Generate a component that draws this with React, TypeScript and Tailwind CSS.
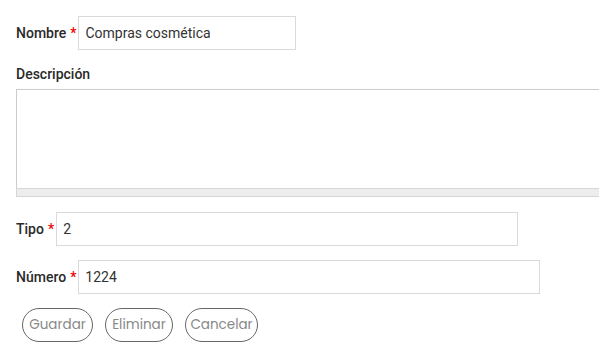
const roboto = { fontFamily: "Roboto, 'Liberation Sans', sans-serif" };

function Label({ text, required }: { text: string; required?: boolean }) {
  return (
    <span className="text-[14px] font-medium text-[#2a2a2a] whitespace-nowrap">
      {text}
      {required && <span className="text-[#e00] ml-1">*</span>}
    </span>
  );
}

function TextField({ value, width }: { value: string; width: string }) {
  return (
    <div className={`${width} h-[34px] border border-[#d9d9d9] flex items-center px-[6px] text-[14px] text-[#333]`}>
      {value}
    </div>
  );
}

function PillButton({ label, width }: { label: string; width: string }) {
  return (
    <button
      className={`${width} h-[34px] rounded-full border border-[#666] text-[#888] text-[13.5px] bg-white text-center`}
      style={{ fontFamily: "Poppins, 'Noto Sans', sans-serif" }}
    >
      {label}
    </button>
  );
}

export default function App() {
  return (
    <div className="w-[599px] h-[352px] overflow-hidden bg-white pl-[16px] pt-[16px]" style={roboto}>
      {/* Nombre */}
      <div className="flex items-center gap-[2px]">
        <Label text="Nombre" required />
        <TextField value="Compras cosmética" width="w-[218px]" />
      </div>

      {/* Descripción */}
      <div className="mt-[14px] h-[20px] flex items-center">
        <Label text="Descripción" />
      </div>
      <div className="mt-[5px] w-[640px]">
        <div className="h-[99px] border border-[#ccc] border-b-0 bg-white" />
        <div className="h-[9px] border border-[#d6d6d6] bg-[#ededed]" />
      </div>

      {/* Tipo */}
      <div className="mt-[15px] flex items-center gap-[2px]">
        <Label text="Tipo" required />
        <TextField value="2" width="w-[462px]" />
      </div>

      {/* Número */}
      <div className="mt-[14px] flex items-center gap-[2px]">
        <Label text="Número" required />
        <TextField value="1224" width="w-[462px]" />
      </div>

      {/* Acciones */}
      <div className="mt-[14px] ml-[6px] flex gap-[12px]">
        <PillButton label="Guardar" width="w-[71px]" />
        <PillButton label="Eliminar" width="w-[68px]" />
        <PillButton label="Cancelar" width="w-[73px]" />
      </div>
    </div>
  );
}
